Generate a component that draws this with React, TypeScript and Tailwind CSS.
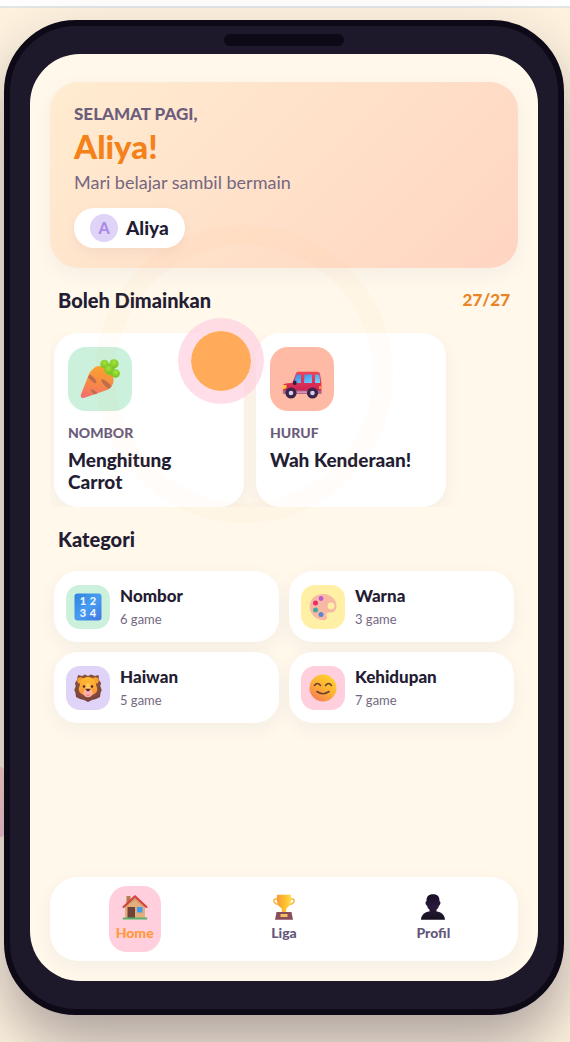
import type { ReactNode } from "react";

type IconProps = { className?: string };

function CarrotIcon({ className }: IconProps) {
  return (
    <svg viewBox="0 0 40 40" className={className} aria-hidden="true">
      <defs>
        <linearGradient id="carrot-body" x1="0.6" y1="0" x2="0.45" y2="1">
          <stop offset="0" stopColor="#f9a42c" />
          <stop offset="0.5" stopColor="#f78c45" />
          <stop offset="1" stopColor="#f4706c" />
        </linearGradient>
        <radialGradient id="carrot-leaf" cx="0.5" cy="0.35" r="0.7">
          <stop offset="0" stopColor="#a3e635" />
          <stop offset="1" stopColor="#6fbf25" />
        </radialGradient>
      </defs>
      <path d="M13 10C16 6.500 22 6 27 9.500C32.500 13.500 35 20 32.800 25C31.800 27.500 30 29.800 27 30.900L4.500 38.800C1.500 39.700 .2 38.300 .9 35.500L9 15C10 12.800 11.500 11.500 13 10Z" fill="url(#carrot-body)" />
      <path d="M9.800 15.500C12 16.700 15 19.500 16.500 22.500C16.500 25 14.500 24.500 13 23.200L7.800 18.500ZM21.500 22.500C20.500 20.500 22.300 19.600 24 20.700C27.500 23 30 25 31.500 27.500L28.800 30C26.500 28 23.500 25.800 21.500 22.500ZM10 31C11.500 29.300 15.500 32 17.500 34.300L14.300 35.400Z" fill="#c06c4b" />
      <path d="M24 5C28 3.500 34 6 36 13C37 17 33 19 31 16C28 17 25 14 25.500 11C23.500 10 23 7 24 5Z" fill="#79c92a" />
      <circle cx="24.500" cy="5" r="4.200" fill="url(#carrot-leaf)" />
      <circle cx="34" cy="4.800" r="4.600" fill="url(#carrot-leaf)" />
      <circle cx="35.700" cy="14.500" r="4.200" fill="url(#carrot-leaf)" />
      <circle cx="28.500" cy="10.500" r="4" fill="url(#carrot-leaf)" />
    </svg>
  );
}

function CarIcon({ className }: IconProps) {
  return (
    <svg viewBox="0 0 40 28" className={className} aria-hidden="true">
      <defs>
        <linearGradient id="car-body" x1="0" y1="0" x2="0" y2="1">
          <stop offset="0" stopColor="#f04455" />
          <stop offset="1" stopColor="#c91f55" />
        </linearGradient>
        <linearGradient id="car-glass" x1="0" y1="0" x2="1" y2="1">
          <stop offset="0" stopColor="#2f8be8" />
          <stop offset="1" stopColor="#7fd4fb" />
        </linearGradient>
      </defs>
      <path d="M16 .8H35C37.500 .8 38 2.500 38.200 4L39.400 12V22.500H1V15C1 13.500 2 12.800 4 12.500L10.500 11.800L13.500 3.500C14 1.600 14.800 .8 16 .8Z" fill="url(#car-body)" />
      <path d="M14.700 3.500H19V12H11.500ZM22.500 3.500H30V12H22ZM33 3.500H36.500C37 3.500 37.200 4 37.300 4.500L38.300 12H33Z" fill="url(#car-glass)" />
      <path d="M1 14H4.500V17L1 18.500Z" fill="#ffc93c" />
      <path d="M.8 19.500H39.200V22.800H.8Z" fill="#a9688f" />
      <path d="M13 21.200H27" stroke="#d795b5" strokeWidth="1.500" />
      <path d="M37 15H39.500V18H37Z" fill="#ff8b4d" />
      <rect x="11" y="9.500" width="3.500" height="4.500" rx="1.500" fill="#371b47" />
      <circle cx="9" cy="22" r="5.600" fill="#3b2548" />
      <circle cx="30.500" cy="22" r="5.600" fill="#3b2548" />
      <circle cx="9" cy="22" r="2.300" fill="#d9cdea" />
      <circle cx="30.500" cy="22" r="2.300" fill="#d9cdea" />
    </svg>
  );
}

function NumbersIcon({ className }: IconProps) {
  return (
    <svg viewBox="0 0 28 28" className={className} aria-hidden="true">
      <defs>
        <linearGradient id="numbers-tile" x1="0" y1="0" x2="1" y2="1">
          <stop offset="0" stopColor="#2f83df" />
          <stop offset="0.5" stopColor="#489df0" />
          <stop offset="1" stopColor="#4276e2" />
        </linearGradient>
      </defs>
      <rect x=".5" y=".5" width="27" height="27" rx="3" fill="url(#numbers-tile)" />
      <g fill="#eef6ff" fontFamily="Lato, sans-serif" fontWeight="900" fontSize="11" textAnchor="middle">
        <text x="9" y="12">1</text>
        <text x="19" y="12">2</text>
        <text x="9" y="24">3</text>
        <text x="19" y="24">4</text>
      </g>
    </svg>
  );
}

function PaletteIcon({ className }: IconProps) {
  return (
    <svg viewBox="0 0 28 28" className={className} aria-hidden="true">
      <path fillRule="evenodd" d="M13 1C21 .5 27.500 6 27.500 12.500C27.500 17.500 24.500 20 21 19.500C18.500 19 16.500 20 17.500 22.500C18.800 25.500 17 27.500 14 27.200C6 26.300 .7 20.500 .7 13.500C.7 6.500 6 1.500 13 1ZM22 9.500A3.400 3.400 0 1 0 22 16.300A3.400 3.400 0 1 0 22 9.500Z" fill="#f8b9a4" />
      <circle cx="12" cy="5.500" r="2.400" fill="#bd58cf" />
      <circle cx="6.500" cy="10" r="2.500" fill="#e82e6e" />
      <circle cx="6.500" cy="17" r="2.500" fill="#41a9a0" />
      <circle cx="12" cy="21.500" r="2.500" fill="#5b82d5" />
    </svg>
  );
}

function LionIcon({ className }: IconProps) {
  return (
    <svg viewBox="0 0 28 28" className={className} aria-hidden="true">
      <defs>
        <radialGradient id="lion-mane" cx="0.5" cy="0.4" r="0.65">
          <stop offset="0" stopColor="#a86535" />
          <stop offset="1" stopColor="#6f3e40" />
        </radialGradient>
        <linearGradient id="lion-face" x1="0" y1="0" x2="0" y2="1">
          <stop offset="0" stopColor="#ffbd2e" />
          <stop offset="1" stopColor="#fa923b" />
        </linearGradient>
      </defs>
      <path d="M4 1L8 2L11 .5L14 2L17 .5L21 2L24.500 1L25 6L27 9L26.300 12L27.700 16L26.500 19L26 23L22 25L18 26L14 28L10 26L6 25L2 23L1.500 19L.3 16L1.700 12L1 9L3 6Z" fill="url(#lion-mane)" />
      <circle cx="6.500" cy="6.500" r="3.300" fill="#f5a02f" />
      <circle cx="21.500" cy="6.500" r="3.300" fill="#f5a02f" />
      <path d="M14 3C19 3 22 7 22 11C23 13 24 16 22.500 18C21 20.500 18 21 14 21S7 20.500 5.500 18C4 16 5 13 6 11C6 7 9 3 14 3Z" fill="url(#lion-face)" />
      <path d="M12.500 9H15.500L16.500 15H11.500Z" fill="#ffca58" />
      <circle cx="10" cy="12.500" r="1.200" fill="#442537" />
      <circle cx="18" cy="12.500" r="1.200" fill="#442537" />
      <ellipse cx="14" cy="19" rx="4.800" ry="4.300" fill="#ffb0a4" />
      <path d="M11.500 14.800H16.500L15 17.200H13Z" fill="#4a263a" />
      <path d="M12 20Q14 21 16 20Q15.500 22.300 14 22.300T12 20Z" fill="#f2808a" />
    </svg>
  );
}

function SmileIcon({ className }: IconProps) {
  return (
    <svg viewBox="0 0 28 28" className={className} aria-hidden="true">
      <defs>
        <linearGradient id="smile-face" x1="0.85" y1="0.05" x2="0.2" y2="1">
          <stop offset="0" stopColor="#ffd42e" />
          <stop offset="0.5" stopColor="#fdb034" />
          <stop offset="1" stopColor="#f57a58" />
        </linearGradient>
      </defs>
      <circle cx="14" cy="14" r="13.500" fill="url(#smile-face)" />
      <path d="M5.500 11.500Q8.500 7.500 11.500 11.500M16.500 11.500Q19.500 7.500 22.500 11.500M8 17.500Q14 22 20 17.500" fill="none" stroke="#6b3f35" strokeWidth="1.600" strokeLinecap="round" />
    </svg>
  );
}

function HomeIcon({ className }: IconProps) {
  return (
    <svg viewBox="0 0 26 26" className={className} aria-hidden="true">
      <path d="M4.500 2H8.500V10H4.500Z" fill="#b0804e" />
      <path d="M3 12L13 3L23 12V25H3Z" fill="#e4ad7c" />
      <path d="M3 12L13 3L23 12V14L13 6L3 14Z" fill="#d29c70" />
      <path d="M1.500 13L13 2.200L24.500 13" fill="none" stroke="#d6413e" strokeWidth="2" strokeLinecap="round" strokeLinejoin="round" />
      <path d="M5.500 13H13V24H5.500Z" fill="#6f4339" />
      <path d="M15 13H20.500V18.500H15Z" fill="#3d9df0" />
      <path d="M.8 23.500H25.200V25.500H.8Z" fill="#57b36c" />
    </svg>
  );
}

function TrophyIcon({ className }: IconProps) {
  return (
    <svg viewBox="0 0 26 26" className={className} aria-hidden="true">
      <defs>
        <linearGradient id="trophy-cup" x1="0" y1="0" x2="1" y2="0">
          <stop offset="0" stopColor="#f79a3a" />
          <stop offset="0.6" stopColor="#ffc22b" />
          <stop offset="1" stopColor="#ffdf4d" />
        </linearGradient>
      </defs>
      <path d="M7 5H5C1.500 5 2 10 8 10.500M19 5H21C24.500 5 24 10 18 10.500" fill="none" stroke="#f9b13c" strokeWidth="1.500" />
      <path d="M6 .8H20C20.600 8 19.500 12.500 15.500 14L15 18.500H11L10.500 14C6.500 12.500 5.400 8 6 .8Z" fill="url(#trophy-cup)" />
      <path d="M5.500 18H20.500L22 25.700H4Z" fill="#8a4d5b" />
      <path d="M9.500 20H16.500V23H9.500Z" fill="#f2bf62" />
    </svg>
  );
}

function PersonIcon({ className }: IconProps) {
  return (
    <svg viewBox="0 0 26 26" className={className} aria-hidden="true">
      <defs>
        <linearGradient id="person-fill" x1="0" y1="0" x2="0" y2="1">
          <stop offset="0" stopColor="#170e26" />
          <stop offset="0.5" stopColor="#2a1a3b" />
          <stop offset="1" stopColor="#15121e" />
        </linearGradient>
      </defs>
      <path d="M13 .3C17.500 .3 19.800 2.800 19.500 7.300C21 7.300 20.600 11 19 11.600C18.600 13.800 17.400 15.200 16.500 15.800V17.500C21.500 18 24.700 21 25 25.700H1C1.300 21 4.500 18 9.500 17.500V15.800C8.600 15.200 7.400 13.800 7 11.600C5.400 11 5 7.300 6.500 7.300C6.200 2.800 8.500 .3 13 .3Z" fill="url(#person-fill)" />
    </svg>
  );
}

const games = [
  { category: "Nombor", title: "Menghitung Carrot", tile: "bg-[#cbf1dc]", icon: <CarrotIcon className="size-10" /> },
  { category: "Huruf", title: "Wah Kenderaan!", tile: "bg-[#ffbaa5]", icon: <CarIcon className="mt-3 h-7 w-10" /> },
];

const categories = [
  { name: "Nombor", count: 6, tile: "bg-[#cbf1dc]", icon: <NumbersIcon className="size-7" /> },
  { name: "Warna", count: 3, tile: "bg-[#fff0a6]", icon: <PaletteIcon className="size-7" /> },
  { name: "Haiwan", count: 5, tile: "bg-[#e0d3f8]", icon: <LionIcon className="size-7" /> },
  { name: "Kehidupan", count: 7, tile: "bg-[#ffcfde]", icon: <SmileIcon className="size-7" /> },
];

function NavItem({ label, icon, active = false }: { label: string; icon: ReactNode; active?: boolean }) {
  return (
    <a
      href="#"
      aria-current={active ? "page" : undefined}
      className={`flex min-w-[52px] flex-col items-center gap-1 justify-self-center rounded-[18px] px-1.5 pt-2 pb-2.5 text-sm leading-[18px] font-black ${
        active ? "bg-[#ffcfde] text-[#ff993b]" : "text-[#65577c]"
      }`}
    >
      {icon}
      {label}
    </a>
  );
}

export default function App() {
  return (
    <div className="relative flex min-h-screen flex-col overflow-hidden bg-[#fff3df] font-['Lato',sans-serif] text-[#231c32]">
      <div className="h-2 border-b-2 border-[#e2e6e7] bg-white" />
      <div className="absolute top-[766px] -left-16 size-[72px] rounded-xl bg-linear-to-b from-[#ffd6cb] to-[#f8c6d0]" />

      <main className="relative mx-auto flex w-full max-w-[600px] grow flex-col pt-3 pr-1.5 pb-[27px] pl-1">
        <div className="relative flex grow flex-col rounded-[72px] border-[6px] border-[#0e0916] bg-[#1d182a] px-5 py-7 shadow-[0_30px_60px_rgba(29,20,45,0.36)]">
          <div className="absolute top-2 left-1/2 h-3 w-[120px] -translate-x-1/2 rounded-full bg-[#0e0916]" />

          <div className="relative flex grow flex-col overflow-hidden rounded-[50px] bg-[#fff8eb] px-5 pt-7 pb-5">
            <header className="rounded-[28px] bg-linear-135 from-[#ffecd1] to-[#ffd5c2] px-6 py-5 shadow-[0_6px_20px_rgba(60,40,80,0.05)]">
              <p className="text-[17px] leading-6 font-black text-[#6c5d7c] uppercase">Selamat pagi,</p>
              <h1 className="text-[33px] leading-10 font-black text-[#f58119]">Aliya!</h1>
              <p className="mt-1 text-lg leading-6 text-[#75677f]">Mari belajar sambil bermain</p>
              <button type="button" className="mt-3.5 flex h-10 items-center gap-2 rounded-full bg-white px-4 text-[19px] leading-6 font-black shadow-[0_4px_12px_rgba(60,40,80,0.05)]">
                <span className="flex size-7 items-center justify-center rounded-full bg-[#e0d3f8] text-base text-[#ab8ae9]">A</span>
                Aliya
              </button>
            </header>

            <section>
              <div className="mt-5 flex items-center justify-between px-2">
                <h2 className="text-xl leading-6 font-black">Boleh Dimainkan</h2>
                <span className="text-[17px] leading-6 font-black text-[#e98427]">27/27</span>
              </div>
              <div className="mt-[21px] flex gap-3 overflow-x-auto px-1">
                {games.map((game) => (
                  <a key={game.title} href="#" className="w-[190px] shrink-0 rounded-3xl bg-white p-3.5 shadow-[0_6px_20px_rgba(60,40,80,0.05)]">
                    <div className={`flex size-16 items-center justify-center rounded-[18px] ${game.tile}`}>{game.icon}</div>
                    <p className="mt-3.5 text-sm leading-4 font-black text-[#6c5d7c] uppercase">{game.category}</p>
                    <h3 className="mt-2 min-h-11 max-w-[144px] text-[19px] leading-[22px] font-black">{game.title}</h3>
                  </a>
                ))}
              </div>
            </section>

            <section>
              <h2 className="mt-5 px-2 text-xl leading-6 font-black">Kategori</h2>
              <div className="mt-5 grid grid-cols-2 gap-2.5 px-1">
                {categories.map((category) => (
                  <a key={category.name} href="#" className="flex min-h-[71px] items-center gap-2.5 rounded-3xl bg-white px-3 shadow-[0_6px_20px_rgba(60,40,80,0.05)]">
                    <div className={`flex size-11 shrink-0 items-center justify-center rounded-[14px] ${category.tile}`}>{category.icon}</div>
                    <div>
                      <h3 className="text-[17px] leading-6 font-black">{category.name}</h3>
                      <p className="text-[13px] leading-[22px] text-[#75677f]">{category.count} game</p>
                    </div>
                  </a>
                ))}
              </div>
            </section>

            <nav aria-label="Utama" className="mt-auto grid grid-cols-3 rounded-[28px] bg-white px-2.5 py-[9px] shadow-[0_6px_20px_rgba(60,40,80,0.05)]">
              <NavItem label="Home" active icon={<HomeIcon className="size-[26px]" />} />
              <NavItem label="Liga" icon={<TrophyIcon className="size-[26px]" />} />
              <NavItem label="Profil" icon={<PersonIcon className="size-[26px]" />} />
            </nav>

            <div className="pointer-events-none absolute top-[171px] left-[65px] size-[298px] rounded-full border-[20px] border-[#ff9a3c]/3" />
            <div className="pointer-events-none absolute top-[264px] left-[148px] size-[86px] rounded-full border-[13px] border-[#ffd0df]/70 bg-[#ffab59] bg-clip-padding" />
          </div>
        </div>
      </main>
    </div>
  );
}
